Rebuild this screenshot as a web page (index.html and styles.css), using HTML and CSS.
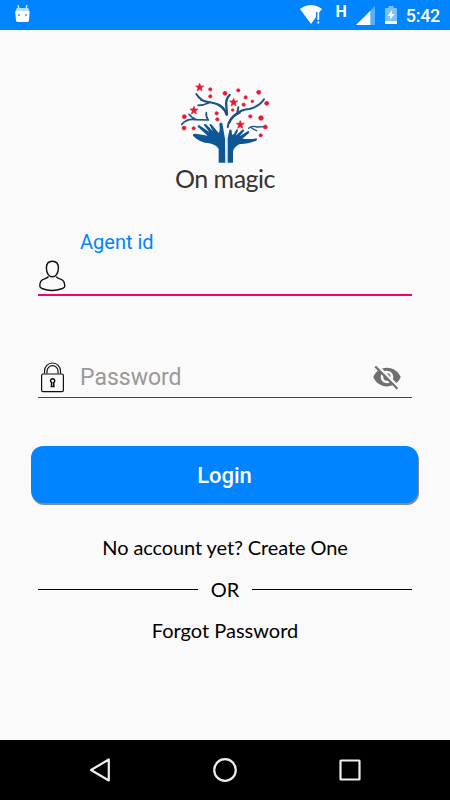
FILE: index.html
```html
<!DOCTYPE html>
<html lang="en">
<head>
<meta charset="utf-8">
<meta name="viewport" content="width=device-width, initial-scale=1">
<title>On magic</title>
<link rel="stylesheet" href="styles.css">
</head>
<body>
<header class="status">
  <svg class="bot" width="16" height="18" viewBox="0 0 16 18"><path d="M4 0l1 4M13 0l-1 4" stroke="#cfe6ff" stroke-width="1.3"/><path d="M3 3h11l1.6 4-.6 8.5q-.4 1.5-2 1.5H4q-1.6 0-2-1.5L1.2 7z" fill="#fff"/><path d="M3 3h11l1.2 3H1.8z" fill="#b9dbff"/><path d="M4 9h2v2H4zM11 9h2v2h-2z" fill="#68b3ff"/></svg>
  <div class="status-right">
    <svg class="wifi" width="23" height="20" viewBox="0 0 23 20"><path d="M0 4Q11 -4 22 4L19.5 7H16v5l-5 7z" fill="#fff"/><path d="M17.4 7h1.8v8h-1.8zM17.4 16.500h1.800v2h-1.800z" fill="#fff"/></svg>
    <span class="network">H</span>
    <svg class="signal" width="20" height="19" viewBox="0 0 20 19"><path d="M0 19L19 0v19z" fill="#59afff"/><path d="M0 19L14.300 5v14z" fill="#fff"/></svg>
    <svg class="battery" width="12" height="18" viewBox="0 0 12 18"><path d="M3.5 0h5v2H12v16H0V2h3.500z" fill="#7dc0ff"/><path d="M0 15h12v3H0zM7.200 4L2.500 10h3L4.600 14 9.600 8h-3z" fill="#fff"/></svg>
    <span class="clock">5:42</span>
  </div>
</header>
<main class="screen">
  <div class="logo">
    <svg width="120" height="90" viewBox="0 0 360 270">
      <g fill="none" stroke="#1b5288" stroke-linecap="round" stroke-linejoin="round">
        <path d="M94 57Q106 78 130 81Q164 84 180 108" stroke-width="6"/>
        <path d="M108 75Q121 80 134 82M99 91Q115 91 132 83" stroke-width="5"/>
        <path d="M194 60Q181 72 184 94L186 119" stroke-width="7"/>
        <path d="M156 87Q178 94 184 118" stroke-width="7"/>
        <path d="M188 156Q192 132 217 116Q218 104 220 97" stroke-width="6"/>
        <path d="M216 116Q228 104 253 102Q284 94 297 73" stroke-width="6"/>
        <path d="M192 143Q202 120 224 113" stroke-width="7"/>
        <path d="M50 148Q66 130 91 134L130 135M72 118Q81 130 94 134M124 113Q122 126 130 135" stroke-width="5"/>
        <path d="M251 160Q261 151 275 156L304 155M260 159Q268 165 275 167" stroke-width="4"/>
      </g>
      <g fill="#0d5795">
        <path d="M161 263V222Q155 210 133 205Q105 204 84 182Q82 175 92 176L128 182L98 155Q97 149 103 151L133 171L116 149Q118 145 123 148L144 169L133 149Q137 145 141 150L161 174Q166 168 163 147Q167 139 172 145L180 191L181 263z"/>
        <path d="M188 263V190L193 166Q197 160 200 167L201 180L207 176L214 164Q219 161 219 167L212 182L232 164Q239 162 237 168L224 184L249 168Q255 168 252 174L232 191Q257 194 274 190Q279 194 272 198Q244 208 225 207Q208 214 204 229V263z"/>
      </g>
      <path d="M184 180V263" stroke="#dceaf3" stroke-width="4"/>
      <g fill="#e91935" stroke="#e91935" stroke-width="2" stroke-linejoin="round">
        <path id="star" d="M104 25l3 8 9 0-7 6 2 9-7-5-8 5 3-9-7-6h8z"/>
        <use href="#star" x="-17" y="69"/><use href="#star" x="102" y="45"/><use href="#star" x="122" y="112"/>
        <circle cx="136" cy="43" r="5"/><circle cx="136" cy="64" r="5"/><circle cx="180" cy="55" r="6"/><circle cx="220" cy="46" r="5"/><circle cx="242" cy="67" r="5"/><circle cx="281" cy="52" r="6"/><circle cx="305" cy="85" r="6"/><circle cx="262" cy="79" r="4"/><circle cx="236" cy="89" r="5"/><circle cx="203" cy="105" r="4"/><circle cx="155" cy="115" r="5"/><circle cx="157" cy="133" r="5"/><circle cx="58" cy="125" r="6"/><circle cx="57" cy="159" r="6"/><circle cx="86" cy="160" r="5"/><circle cx="256" cy="124" r="5"/><circle cx="288" cy="129" r="7"/><circle cx="301" cy="156" r="6"/><circle cx="287" cy="181" r="5"/>
      </g>
    </svg>
    <div class="brand">On magic</div>
  </div>
  <form class="form">
    <label class="label" for="agent">Agent id</label>
    <div class="field active">
      <svg class="user" width="28" height="32" viewBox="0 0 28 32" fill="none" stroke="#111" stroke-width="1.4"><path d="M14.400 1.300c-4 0-6 3-6 6.700 0 5 2.500 8.800 6 8.800s6-3.800 6-8.800c0-3.700-2-6.700-6-6.700z"/><path d="M10.500 16.500Q9.500 18 6 19.200Q1.700 20.500 1.800 26Q1.800 27.500 4 28.500Q9 30.600 14 30.500T24.500 28.500Q26.900 27.500 26.800 26Q26.600 20.500 22.500 19.200Q19 18 18.200 16.500"/></svg>
      <input id="agent" type="text">
    </div>
    <div class="field password">
      <svg class="lock" width="28" height="32" viewBox="0 0 28 32" fill="none" stroke="#111" stroke-width="1.2"><rect x="3.600" y="13" width="21.800" height="17.600" rx="1.400"/><path d="M6.500 12.500V10a8 8 0 0 1 16 0V12.500M9 12.500V10.200a5.500 5.500 0 0 1 11 0V12.500"/><path d="M13.700 21.600a2.100 2.100 0 1 1 1.900 0l.3 3.800h-2.500z" stroke-width="1.500"/></svg>
      <input type="password" placeholder="Password" aria-label="Password">
      <svg class="eye" width="30" height="30" viewBox="0 0 24 24" fill="#6f6f6f"><path d="M12 7c2.76 0 5 2.24 5 5 0 .65-.13 1.26-.36 1.83l2.92 2.92c1.51-1.26 2.7-2.89 3.43-4.75-1.73-4.39-6-7.5-11-7.5-1.4 0-2.74.25-3.98.7l2.16 2.16C10.74 7.13 11.35 7 12 7zM2 4.27l2.28 2.28.46.46C3.08 8.3 1.78 10.02 1 12c1.73 4.39 6 7.5 11 7.5 1.55 0 3.03-.3 4.38-.84l.42.42L19.73 22 21 20.73 3.27 3 2 4.27zM7.53 9.8l1.55 1.55c-.05.21-.08.43-.08.65 0 1.66 1.34 3 3 3 .22 0 .44-.03.65-.08l1.55 1.55c-.67.33-1.41.53-2.2.53-2.76 0-5-2.24-5-5 0-.79.2-1.53.53-2.2zm4.31-.78l3.15 3.15.02-.16c0-1.66-1.34-3-3-3l-.17.01z"/></svg>
    </div>
    <button class="login" type="button">Login</button>
  </form>
  <div class="link create"><span>No account yet? Create One</span></div>
  <div class="divider"><span>OR</span></div>
  <div class="link forgot"><span>Forgot Password</span></div>
</main>
<nav class="nav">
  <svg width="24" height="26" viewBox="0 0 24 26"><path d="M20.800 2.500v21L3 13z"/></svg>
  <svg width="26" height="26" viewBox="0 0 26 26"><circle cx="13" cy="13" r="10.800"/></svg>
  <svg width="24" height="26" viewBox="0 0 24 26"><rect x="2.500" y="3.500" width="19" height="19" rx=".5"/></svg>
</nav>
</body>
</html>
```

FILE: styles.css
```css
* { box-sizing: border-box; }
body {
  margin: 0;
  height: 800px;
  display: flex;
  flex-direction: column;
  overflow: hidden;
  background: #fafafa;
  font-family: Roboto, "Liberation Sans", sans-serif;
}
svg { display: block; flex: none; }
.status {
  height: 30px;
  flex: none;
  display: flex;
  justify-content: space-between;
  align-items: flex-start;
  padding: 0 10px 0 14px;
  background: #0084ff;
  color: #fff;
}
.bot { margin-top: 5px; }
.status-right { display: flex; align-items: flex-start; }
.wifi { margin-top: 5px; }
.network { margin: 4px 9px 0 12px; font-size: 16px; line-height: 16px; font-weight: 700; }
.signal { margin-top: 6px; }
.battery { margin: 6px 0 0 9px; }
.clock { margin-left: 9px; font-size: 18px; line-height: 32px; font-weight: 500; letter-spacing: -0.3px; }
.screen { flex: 1; display: flex; flex-direction: column; }
.logo { margin-top: 45px; display: flex; flex-direction: column; align-items: center; }
.brand {
  font: 400 25px/30px Lato, sans-serif;
  height: 30px;
  margin-top: -2px;
  letter-spacing: -0.5px;
  color: #333;
  white-space: nowrap;
}
.form { padding: 0 38px; display: flex; flex-direction: column; margin-top: 37px; }
.label { margin-left: 42px; font-size: 20px; line-height: 24px; color: #0084ff; }
.field { display: flex; align-items: center; border-bottom: 1px solid #444; }
.active { height: 42px; border-bottom: 2px solid #f50072; }
.user { margin-top: 3px; }
.field input {
  flex: 1;
  min-width: 0;
  height: 36px;
  border: 0;
  outline: 0;
  padding: 0;
  margin-left: 14px;
  background: transparent;
  font: 400 23px/30px Roboto, sans-serif;
}
.field input::placeholder { color: #999; opacity: 1; }
.password { height: 42px; margin-top: 60px; }
.password input { padding-top: 2px; }
.eye { margin: 1px 10px 0 0; }
.login {
  height: 57px;
  margin: 48px -6px 0 -7px;
  border: 0;
  border-radius: 12px;
  background: #0084ff;
  box-shadow: 1px 2px 0 #858a90;
  color: #fff;
  font: 500 22px/57px Roboto, sans-serif;
}
.link, .divider { font: 400 20px/24px Lato, sans-serif; color: #000; text-align: center; }
.create { margin-top: 32px; letter-spacing: -0.1px; }
.divider { display: flex; align-items: center; gap: 12.5px; margin: 18px 38px 0; }
.divider::before, .divider::after { content: ""; flex: 1; height: 1px; background: #000; }
.forgot { margin-top: 17px; }
.nav {
  height: 60px;
  flex: none;
  display: flex;
  justify-content: space-between;
  align-items: center;
  padding: 0 88px;
  background: #000;
}
.nav svg { fill: none; stroke: #eee; stroke-width: 2.2; stroke-linejoin: round; }
```
